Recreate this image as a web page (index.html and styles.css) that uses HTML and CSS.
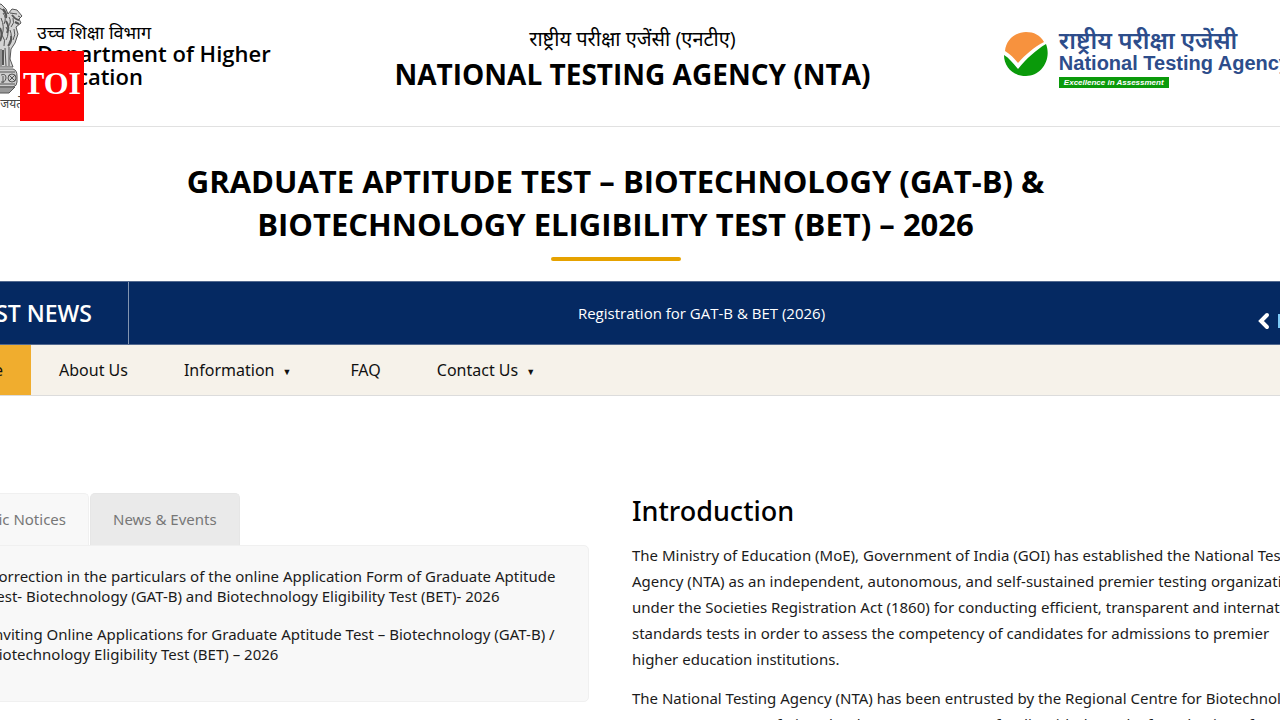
FILE: index.html
```html
<!DOCTYPE html>
<html lang="en">
  <head>
    <meta charset="utf-8">
    <title>GAT-B &amp; BET 2026 - National Testing Agency</title>
    <link rel="stylesheet" href="styles.css">
  </head>
  <body>
    <div class="page">
      <header class="site-header">
        <div class="department">
          <div class="emblem">
            <svg width="84" height="94" viewBox="0 0 84 94" fill="none" stroke="#555" stroke-width="1">
              <path fill="#ddd" d="M28 20 C24 6 34 0 43 0 C52 0 62 6 58 20 L62 44 L24 44Z"/>
              <path fill="#d4d4d4" d="M55 3 L62 1 L67 6 L69 11 L73 6 L78 7 L83 13 L80 16 L82 20 L77 24 L79 31 L76 40 L72 46 L71 56 L74 64 L58 64Z"/>
              <path d="M60 5 q5 1 6 6 M71 10 l7 1 M79 13 l2 1 M64 10 q4 5 1 11 M70 14 q3 5-1 10 M74 15 q2 5-2 9 M62 15 q4 9 1 17 M67 24 q4 6 0 13 M71 27 q3 7-1 13 M75 26 q2 6-1 11 M63 32 q4 5 2 11 M62 46 v17 M66 45 l1 18 M70 44 v19"/>
              <path stroke-width="2" d="M64 6 q4 4 3 9 M67 18 q4 6 1 12 M61 25 q3 6 0 13 M72 33 q1 6-3 10 M64 47 v15 M73 12 q4 5 7 5 M76 19 l4 2"/>
              <path fill="#ccc" d="M10 66 h64 q4 1 4 7 v6 q0 4-4 5 H10Z"/>
              <path d="M10 69 h66 M10 81 h66"/>
              <circle cx="73" cy="75" r="4"/>
              <path d="M62 72 q5-2 5 3 q-1 5-5 4 M64 73 v7 M70 72 l6 6 M76 72 l-6 6"/>
              <path fill="#999" d="M14 84 h62 l-6 6 H20Z"/>
            </svg>
            <span class="motto">सत्यमेव जयते</span>
          </div>
          <div class="department-name">
            <p class="hindi">उच्च शिक्षा विभाग</p>
            <p class="english">Department of Higher Education</p>
          </div>
          <a class="toi" href="#">TOI</a>
        </div>

        <div class="agency">
          <p class="agency-hindi">राष्ट्रीय परीक्षा एजेंसी (एनटीए)</p>
          <p class="agency-english">NATIONAL TESTING AGENCY (NTA)</p>
        </div>

        <a class="nta-logo" href="#">
          <svg width="46" height="46" viewBox="0 0 46 46">
            <path fill="#f7923e" d="M2 20 C3 9 12 1 23 1 C31 1 37 4 41 11 C31 16 22 24 15 32 C11 27 7 23 2 20Z"/>
            <path fill="#0a9a0a" d="M1 24 C6 27 10 32 15 38 C24 27 33 19 43 13 C49 29 38 45 23 45 C10 45 1 36 1 24Z"/>
          </svg>
          <div class="nta-logo-text">
            <span class="nta-hindi">राष्ट्रीय परीक्षा एजेंसी</span>
            <span class="nta-english">National Testing Agency</span>
            <span class="nta-tagline">Excellence in Assessment</span>
          </div>
        </a>
      </header>

      <section class="exam-title">
        <h1>GRADUATE APTITUDE TEST – BIOTECHNOLOGY (GAT-B) &amp; BIOTECHNOLOGY ELIGIBILITY TEST (BET) – 2026</h1>
      </section>

      <section class="news-bar">
        <h2>LATEST NEWS</h2>
        <a class="news-item" href="#">Registration for GAT-B &amp; BET (2026)</a>
        <div class="news-controls">
          <button type="button" aria-label="Previous">
            <svg width="12" height="18" viewBox="0 0 12 18" fill="none" stroke="#fff" stroke-width="4" stroke-linecap="round"><path d="M9 3 L3 9 L9 15"/></svg>
          </button>
          <button type="button" aria-label="Pause">
            <svg width="12" height="14" viewBox="0 0 12 14" fill="#7cc8f5"><path d="M0 0h4v14H0zM8 0h4v14H8z"/></svg>
          </button>
        </div>
      </section>

      <nav class="main-nav">
        <a class="active" href="#">Home</a>
        <a href="#">About Us</a>
        <a class="has-menu" href="#">Information</a>
        <a href="#">FAQ</a>
        <a class="has-menu" href="#">Contact Us</a>
      </nav>

      <main class="content">
        <section class="notices">
          <div class="tabs">
            <button type="button" class="tab active">Public Notices</button>
            <button type="button" class="tab">News &amp; Events</button>
          </div>
          <ul class="notice-list">
            <li><a href="#">Correction in the particulars of the online Application Form of Graduate Aptitude Test- Biotechnology (GAT-B) and Biotechnology Eligibility Test (BET)- 2026</a></li>
            <li><a href="#">Inviting Online Applications for Graduate Aptitude Test – Biotechnology (GAT-B) / Biotechnology Eligibility Test (BET) – 2026</a></li>
          </ul>
        </section>

        <section class="intro">
          <h2>Introduction</h2>
          <p>The Ministry of Education (MoE), Government of India (GOI) has established the National Testing Agency (NTA) as an independent, autonomous, and self-sustained premier testing organization under the Societies Registration Act (1860) for conducting efficient, transparent and international standards tests in order to assess the competency of candidates for admissions to premier<br> higher education institutions.</p>
          <p>The National Testing Agency (NTA) has been entrusted by the Regional Centre for Biotechnology (RCB), Department of Biotechnology, Government of India with the task of conducting of</p>
        </section>
      </main>
    </div>
  </body>
</html>
```
FILE: styles.css
```css
* {
  box-sizing: border-box;
}
html {
  height: 100%;
  overflow: hidden;
}
body {
  margin: 0;
  height: 100%;
  overflow: hidden;
  background: #fff;
  color: #1b1b1b;
  font-family: "Noto Sans", "Open Sans", sans-serif;
  font-size: 15px;
}
h1,
h2,
p,
ul {
  margin: 0;
  padding: 0;
}
a {
  color: inherit;
  text-decoration: none;
}
button {
  border: 0;
  font: inherit;
  cursor: pointer;
}

/* page runs a little past both window edges */
.page {
  margin: 0 -10px 0 -59px;
}

/* header */
.site-header,
.exam-title,
.news-bar {
  font-family: "Open Sans", "Noto Sans", sans-serif;
}
.site-header {
  display: grid;
  grid-template-columns: 1fr auto 1fr;
  height: 127px;
  border-bottom: 1px solid #e1e1e1;
}
.department {
  position: relative;
  display: flex;
  gap: 14px;
}
.emblem {
  display: flex;
  flex-direction: column;
  align-items: flex-end;
  width: 82px;
  padding-top: 3px;
}
.emblem svg {
  flex: none;
}
.motto {
  color: #444;
  font-size: 12px;
  line-height: 14px;
  white-space: nowrap;
}
.department-name {
  width: 250px;
  padding-top: 22px;
}
.hindi {
  color: #000;
  font-size: 18px;
  line-height: 20px;
}
.english {
  color: #000;
  font-size: 22px;
  font-weight: 600;
  line-height: 23px;
}
.toi {
  position: absolute;
  left: 79px;
  top: 51px;
  width: 64px;
  height: 70px;
  background: #f00;
  color: #fff;
  font-family: "Liberation Serif", serif;
  font-size: 32px;
  font-weight: bold;
  line-height: 64px;
  text-align: center;
}
.agency {
  padding: 24px 0 0 34px;
  color: #000;
  text-align: center;
}
.agency-hindi {
  font-size: 20px;
  line-height: 30px;
}
.agency-english {
  font-size: 28px;
  font-weight: 700;
  line-height: 40px;
}
.nta-logo {
  display: flex;
  justify-self: end;
  gap: 10px;
  padding: 31px 0 0;
}
.nta-logo-text {
  display: flex;
  flex-direction: column;
  align-items: flex-start;
  color: #2d4d8b;
  font-weight: 700;
  white-space: nowrap;
}
.nta-hindi {
  font-size: 24px;
  font-weight: 600;
  line-height: 18px;
}
.nta-english {
  font-family: "Liberation Sans", sans-serif;
  font-size: 20px;
  line-height: 28px;
}
.nta-tagline {
  padding: 0 5px;
  background: #0a9a0a;
  color: #fff;
  font-family: "Liberation Sans", sans-serif;
  font-size: 8px;
  font-style: italic;
  line-height: 11px;
}

/* exam title */
.exam-title {
  padding: 33px 200px 20px;
  text-align: center;
}
.exam-title h1 {
  color: #000;
  font-size: 31px;
  font-weight: 700;
  line-height: 43px;
}
.exam-title h1::after {
  content: "";
  display: block;
  width: 130px;
  height: 4px;
  margin: 11px auto 0;
  border-radius: 3px;
  background: #e6a200;
}

/* latest news */
.news-bar {
  display: flex;
  align-items: center;
  height: 64px;
  border-top: 1px solid #53698f;
  border-bottom: 1px solid #53698f;
  background: #052962;
  color: #fff;
}
.news-bar h2 {
  width: 188px;
  padding-right: 36px;
  border-right: 1px solid #8294b0;
  font-size: 23px;
  font-weight: 600;
  line-height: 62px;
  text-align: right;
  white-space: nowrap;
}
.news-item {
  flex: 1;
  padding-left: 16px;
  text-align: center;
}
.news-controls {
  display: flex;
  align-items: center;
  gap: 8px;
  padding-top: 16px;
}
.news-controls button {
  display: flex;
  padding: 0;
  background: none;
}

/* navigation */
.main-nav {
  display: flex;
  height: 51px;
  border-bottom: 1px solid #dcdcdc;
  background: #f6f2ea;
}
.main-nav a {
  padding: 0 28px;
  color: #111;
  font-size: 16px;
  line-height: 50px;
}
.main-nav .active {
  width: 90px;
  padding-left: 0;
  background: #f0ad2e;
  text-align: right;
}
.main-nav .has-menu::after {
  content: "▼";
  margin: 0 3px 0 8px;
  font-size: 9px;
  line-height: 1;
  vertical-align: middle;
}

/* content */
.content {
  display: grid;
  grid-template-columns: 648px 1fr;
  gap: 43px;
  padding-top: 97px;
}
.tabs {
  display: flex;
  gap: 1px;
}
.tab {
  padding: 0 22px;
  border: 1px solid #e6e6e6;
  border-bottom: 0;
  border-radius: 5px 5px 0 0;
  background: #eaeaea;
  color: #777;
  line-height: 51px;
}
.tab.active {
  width: 148px;
  border-color: #f0f0f0;
  background: #f8f8f8;
  text-align: right;
  white-space: nowrap;
}
.notice-list {
  padding: 20px 27px 37px 47px;
  border: 1px solid #f0f0f0;
  border-radius: 0 5px 5px 5px;
  background: #f8f8f8;
  list-style: none;
}
.notice-list li {
  line-height: 20px;
}
.notice-list li + li {
  margin-top: 18px;
}
.intro {
  margin-right: -30px;
}
.intro h2 {
  color: #000;
  font-size: 27px;
  font-weight: 500;
  line-height: 36px;
}
.intro p {
  margin-top: 13px;
  line-height: 26px;
}
```
